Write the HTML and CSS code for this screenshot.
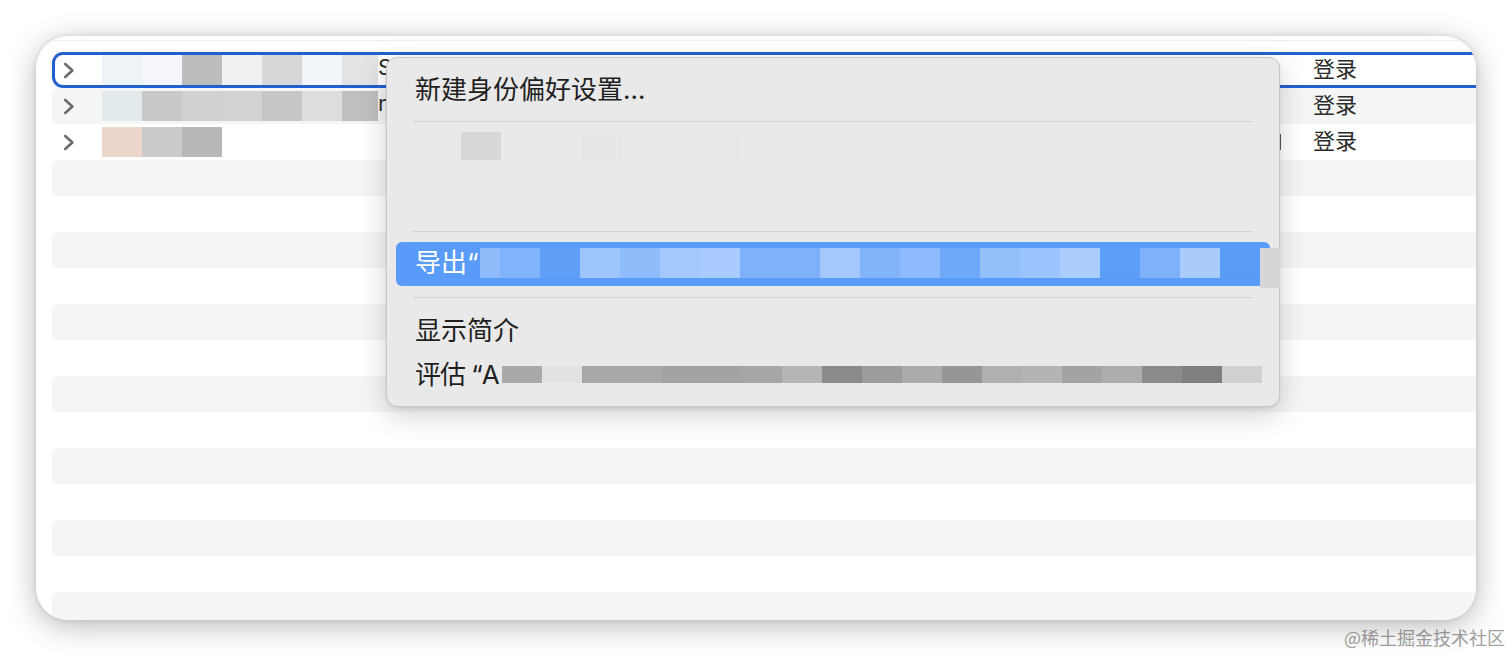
FILE: index.html
```html
<!DOCTYPE html>
<html lang="zh-CN">
<head>
<meta charset="utf-8">
<title>钥匙串</title>
<link rel="stylesheet" href="styles.css">
</head>
<body>
<div class="page">
  <div class="window">
    <div class="topline"></div>
    <div class="list">
      <div class="row selected r0">
        <span class="chev"><svg width="12" height="17" viewBox="0 0 12 17"><path d="M2.2 2 L9.4 8.5 L2.2 15" fill="none" stroke="#6c6c6c" stroke-width="2.6" stroke-linecap="round" stroke-linejoin="round"/></svg></span>
        <span class="mosaic"><i class="px"></i><i class="px"></i><i class="px"></i><i class="px"></i><i class="px"></i><i class="px"></i><i class="px"></i></span>
        <span class="name">S</span>
        <span class="status">登录</span>
      </div>
      <div class="row alt r1">
        <span class="chev"><svg width="12" height="17" viewBox="0 0 12 17"><path d="M2.2 2 L9.4 8.5 L2.2 15" fill="none" stroke="#6c6c6c" stroke-width="2.6" stroke-linecap="round" stroke-linejoin="round"/></svg></span>
        <span class="mosaic"><i class="px"></i><i class="px"></i><i class="px"></i><i class="px"></i><i class="px"></i><i class="px"></i><i class="px"></i></span>
        <span class="name">n</span>
        <span class="status">登录</span>
      </div>
      <div class="row r2">
        <span class="chev"><svg width="12" height="17" viewBox="0 0 12 17"><path d="M2.2 2 L9.4 8.5 L2.2 15" fill="none" stroke="#6c6c6c" stroke-width="2.6" stroke-linecap="round" stroke-linejoin="round"/></svg></span>
        <span class="mosaic"><i class="px"></i><i class="px"></i><i class="px"></i><i class="px"></i><i class="px"></i><i class="px"></i><i class="px"></i></span>
        <span class="name"><b class="txt"></b><i class="colsep"></i></span>
        <span class="status">登录</span>
      </div>
      <div class="row alt"></div>
      <div class="row"></div>
      <div class="row alt"></div>
      <div class="row"></div>
      <div class="row alt"></div>
      <div class="row"></div>
      <div class="row alt"></div>
      <div class="row"></div>
      <div class="row alt"></div>
      <div class="row"></div>
      <div class="row alt"></div>
      <div class="row"></div>
      <div class="row alt"></div>
    </div>

    <div class="menu">
      <div class="mi first">新建身份偏好设置…</div>
      <div class="sep first"></div>
      <div class="ghost"><i class="gq"></i><i class="gq"></i><i class="gq"></i><i class="gq"></i><i class="gq"></i><i class="gq"></i><i class="gq"></i><i class="gq"></i></div>
      <div class="sep"></div>
      <div class="mi hl">
        <span class="lbl">导出“</span>
        <span class="cells"><i class="q"></i><i class="q"></i><i class="q"></i><i class="q"></i><i class="q"></i><i class="q"></i><i class="q"></i><i class="q"></i><i class="q"></i><i class="q"></i><i class="q"></i><i class="q"></i><i class="q"></i><i class="q"></i><i class="q"></i><i class="q"></i><i class="q"></i><i class="q"></i><i class="q"></i><i class="q"></i><i class="q"></i></span>
      </div>
      <div class="sep"></div>
      <div class="mi">显示简介</div>
      <div class="mi ev">
        <span class="lbl">评估 “A</span>
        <span class="cells"><i class="q"></i><i class="q"></i><i class="q"></i><i class="q"></i><i class="q"></i><i class="q"></i><i class="q"></i><i class="q"></i><i class="q"></i><i class="q"></i><i class="q"></i><i class="q"></i><i class="q"></i><i class="q"></i><i class="q"></i><i class="q"></i><i class="q"></i><i class="q"></i><i class="q"></i></span>
      </div>
    </div>
  </div>
</div>
<div class="wm">@稀土掘金技术社区</div>
</body>
</html>
```

FILE: styles.css
```css
* {
  box-sizing: border-box;
  margin: 0;
  padding: 0;
}

html, body {
  width: 1512px;
  height: 656px;
  overflow: hidden;
  background: #ffffff;
}

body {
  font-family: "Inter", "Noto Sans CJK SC", sans-serif;
  color: #222;
}

.page {
  padding: 36px 36px 0 36px;
}

.window {
  position: relative;
  height: 584px;
  background: #ffffff;
  border-radius: 32px;
  overflow: hidden;
  box-shadow: 0 6px 30px rgba(0, 0, 0, 0.28), 0 0 5px rgba(0, 0, 0, 0.10);
}

.topline {
  height: 1px;
  background: #efefef;
  margin: 4px 0 11px;
}

.list {
  display: flex;
  flex-direction: column;
  padding-left: 16px;
}

.row {
  display: flex;
  align-items: center;
  flex-shrink: 0;
  width: 1438px;
  height: 36px;
  border: 3px solid transparent;
  border-right: 0;
  border-radius: 8px 0 0 8px;
}

.row.alt {
  background: #f4f5f5;
  border-radius: 6px 0 0 6px;
}

.row.selected {
  border-color: #2360cf;
  border-radius: 11px 0 0 11px;
}

.chev {
  width: 47px;
  align-self: stretch;
  display: flex;
  align-items: center;
  padding-left: 8px;
}

.mosaic {
  width: 276px;
  align-self: stretch;
  display: flex;
}

.px {
  width: 40px;
  flex-shrink: 0;
}

.px:last-child {
  width: 36px;
}

.r0 .px:nth-child(1) { background: #eef3f8; }
.r0 .px:nth-child(2) { background: #f4f6f9; }
.r0 .px:nth-child(3) { background: #bcbcbc; }
.r0 .px:nth-child(4) { background: #eff1f3; }
.r0 .px:nth-child(5) { background: #d5d7d9; }
.r0 .px:nth-child(6) { background: #f3f6f9; }
.r0 .px:nth-child(7) { background: #e1e3e5; }

.r1 .px:nth-child(1) { background: #e3eaee; }
.r1 .px:nth-child(2) { background: #c9c9c9; }
.r1 .px:nth-child(3) { background: #d0d2d1; }
.r1 .px:nth-child(4) { background: #d3d3d3; }
.r1 .px:nth-child(5) { background: #c7c7c7; }
.r1 .px:nth-child(6) { background: #dddddd; }
.r1 .px:nth-child(7) { background: #bfbfbf; }

.r2 .px:nth-child(1) { background: #edd7cc; }
.r2 .px:nth-child(2) { background: #cbcbcb; }
.r2 .px:nth-child(3) { background: #b7b7b7; }

.name {
  flex: 1;
  margin-right: 32px;
  display: flex;
  align-items: center;
  justify-content: space-between;
  font-size: 22px;
  color: #2b2b2b;
  padding-bottom: 6px;
}

.colsep {
  width: 1px;
  height: 16px;
  margin-top: 6px;
  background: #5a5a5a;
}

.status {
  width: 177px;
  font-size: 22px;
  color: #2b2b2b;
  padding-bottom: 6px;
}

/* context menu */
.menu {
  position: absolute;
  left: 350px;
  top: 21px;
  width: 894px;
  height: 350px;
  background: #e9e9e9;
  border: 1px solid #c6c6c6;
  border-radius: 11px;
  box-shadow: 0 8px 28px rgba(0, 0, 0, 0.18), 0 1px 3px rgba(0, 0, 0, 0.08);
  padding: 10px 9px;
  font-size: 26px;
  color: #1f1f1f;
}

.mi {
  height: 44px;
  display: flex;
  align-items: center;
  padding-left: 19px;
  padding-bottom: 3px;
  white-space: nowrap;
}

.mi.first {
  padding-bottom: 6px;
}

.sep {
  height: 1px;
  background: #d2d2d2;
  margin: 11px 17px 10px;
}

.sep.first {
  margin-top: 9px;
}

.ghost {
  height: 88px;
  display: flex;
  align-items: flex-start;
  padding-left: 25px;
}

.gq {
  width: 40px;
  height: 28px;
}

.gq:nth-child(2) { background: #d7d8da; }
.gq:nth-child(5) { background: #e7e7e9; }
.gq:nth-child(8) { background: #e7e8e9; }

.lbl {
  flex-shrink: 0;
}

.cells {
  display: flex;
}

.q {
  width: 40px;
  flex-shrink: 0;
}

/* highlighted "export" item */
.mi.hl {
  background: #589bf8;
  color: #ffffff;
  border-radius: 6px;
  align-items: flex-start;
  padding-bottom: 0;
}

.hl .lbl {
  width: 65px;
  line-height: 42px;
}

.hl .cells {
  margin-top: 6px;
  align-items: flex-start;
}

.hl .q {
  height: 30px;
}

.hl .q:first-child { width: 20px; background: #8fbbfb; }
.hl .q:nth-child(2) { background: #7fb3fa; }
.hl .q:nth-child(3) { background: #5f9ff8; }
.hl .q:nth-child(4) { background: #9ec5fc; }
.hl .q:nth-child(5) { background: #8fbcfb; }
.hl .q:nth-child(6) { background: #a6c9fd; }
.hl .q:nth-child(7) { background: #a9cbfd; }
.hl .q:nth-child(8) { background: #7eb1f9; }
.hl .q:nth-child(9) { background: #7eb1f9; }
.hl .q:nth-child(10) { background: #a4c8fc; }
.hl .q:nth-child(11) { background: #82b4fa; }
.hl .q:nth-child(12) { background: #8ebbfb; }
.hl .q:nth-child(13) { background: #6fa8f9; }
.hl .q:nth-child(14) { background: #93bffb; }
.hl .q:nth-child(15) { background: #9cc4fc; }
.hl .q:nth-child(16) { background: #abcdfd; }
.hl .q:nth-child(17) { background: #5d9ef8; }
.hl .q:nth-child(18) { background: #7db2fa; }
.hl .q:nth-child(19) { background: #a9ccfd; }
.hl .q:nth-child(20) { background: #5a9cf8; }
.hl .q:nth-child(21) { width: 20px; height: 40px; background: #d6d6d8; }

/* evaluate item */
.ev .lbl {
  width: 87px;
  letter-spacing: -1px;
}

.ev .q {
  height: 17px;
}

.ev .cells {
  margin-top: 4px;
}

.ev .q:nth-child(1) { background: #a9a9a9; }
.ev .q:nth-child(2) { background: #e2e2e2; }
.ev .q:nth-child(3) { background: #a8a8a8; }
.ev .q:nth-child(4) { background: #a8a8a8; }
.ev .q:nth-child(5) { background: #a3a3a3; }
.ev .q:nth-child(6) { background: #a3a3a3; }
.ev .q:nth-child(7) { background: #a6a6a6; }
.ev .q:nth-child(8) { background: #b5b5b5; }
.ev .q:nth-child(9) { background: #8b8b8b; }
.ev .q:nth-child(10) { background: #9c9c9c; }
.ev .q:nth-child(11) { background: #ababab; }
.ev .q:nth-child(12) { background: #969696; }
.ev .q:nth-child(13) { background: #b0b0b0; }
.ev .q:nth-child(14) { background: #b4b4b4; }
.ev .q:nth-child(15) { background: #a3a3a3; }
.ev .q:nth-child(16) { background: #adadad; }
.ev .q:nth-child(17) { background: #8b8b8b; }
.ev .q:nth-child(18) { background: #7f7f7f; }
.ev .q:nth-child(19) { background: #d0d0d0; }

/* watermark */
.wm {
  margin-top: 7px;
  padding-right: 7px;
  text-align: right;
  font-family: "Noto Sans CJK SC", sans-serif;
  font-weight: 400;
  font-size: 18px;
  line-height: 20px;
  color: #a2a2a2;
}
```
